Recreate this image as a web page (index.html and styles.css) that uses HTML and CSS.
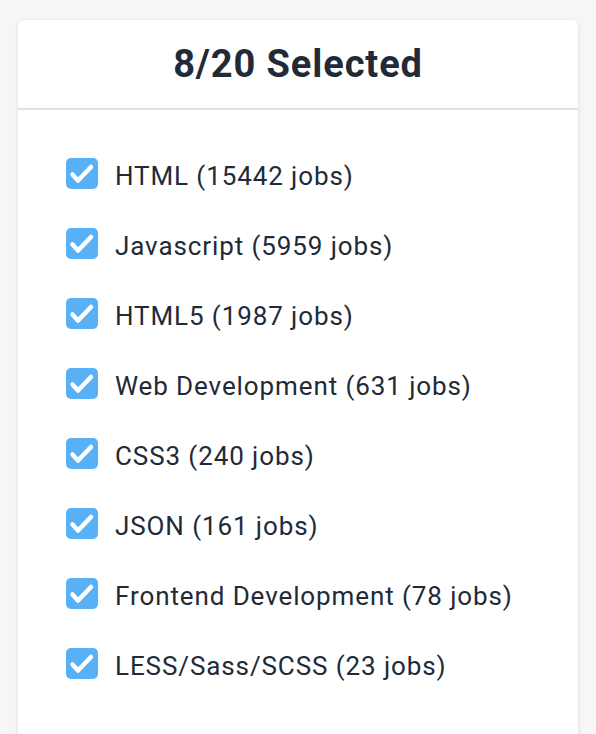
FILE: index.html
```html
<html>
<head>
<meta name="viewport" content="width=device-width, initial-scale=1">
<title>Skills filter</title>
<link rel="stylesheet" href="styles.css">
</head>
<body>
<div class="card">
	<div class="card-head">8/20 Selected</div>
	<ul class="skill-list">
		<li class="skill"><span class="check"><svg viewBox="0 0 32 31"><path d="M6.5 16.5l5.5 6L25 9"/></svg></span><span class="label">HTML (15442 jobs)</span></li>
		<li class="skill"><span class="check"><svg viewBox="0 0 32 31"><path d="M6.5 16.5l5.5 6L25 9"/></svg></span><span class="label">Javascript (5959 jobs)</span></li>
		<li class="skill"><span class="check"><svg viewBox="0 0 32 31"><path d="M6.5 16.5l5.5 6L25 9"/></svg></span><span class="label">HTML5 (1987 jobs)</span></li>
		<li class="skill"><span class="check"><svg viewBox="0 0 32 31"><path d="M6.5 16.5l5.5 6L25 9"/></svg></span><span class="label">Web Development (631 jobs)</span></li>
		<li class="skill"><span class="check"><svg viewBox="0 0 32 31"><path d="M6.5 16.5l5.5 6L25 9"/></svg></span><span class="label">CSS3 (240 jobs)</span></li>
		<li class="skill"><span class="check"><svg viewBox="0 0 32 31"><path d="M6.5 16.5l5.5 6L25 9"/></svg></span><span class="label">JSON (161 jobs)</span></li>
		<li class="skill"><span class="check"><svg viewBox="0 0 32 31"><path d="M6.5 16.5l5.5 6L25 9"/></svg></span><span class="label">Frontend Development (78 jobs)</span></li>
		<li class="skill"><span class="check"><svg viewBox="0 0 32 31"><path d="M6.5 16.5l5.5 6L25 9"/></svg></span><span class="label">LESS/Sass/SCSS (23 jobs)</span></li>
	</ul>
</div>
</body>
</html>
```
FILE: styles.css
```css
body {
margin: 0;
padding: 20px 18px 0;
background-color: #f6f6f6;
font-family: Roboto, "Liberation Sans", Arial, sans-serif;
color: #222a37;
overflow: hidden;
}

.card {
background-color: white;
border-radius: 6px;
box-shadow: 0 1px 4px rgba(0, 0, 0, 0.12);
min-height: 740px;
}

.card-head {
height: 88px;
display: flex;
align-items: center;
justify-content: center;
border-bottom: 2px solid #e2e2e2;
font-size: 38px;
font-weight: 700;
letter-spacing: 0.9px;
}

.skill-list {
list-style: none;
margin: 0;
padding: 48px 0 0 48px;
display: flex;
flex-direction: column;
gap: 39px;
}

.skill {
display: flex;
align-items: center;
gap: 17px;
height: 31px;
font-size: 26px;
letter-spacing: 0.9px;
}

.label {
padding-top: 4px;
}

.check {
width: 32px;
height: 31px;
border-radius: 5px;
background-color: #58b1f6;
display: flex;
}

.check svg {
width: 32px;
height: 31px;
fill: none;
stroke: white;
stroke-width: 4.5;
stroke-linecap: round;
stroke-linejoin: round;
}
```
